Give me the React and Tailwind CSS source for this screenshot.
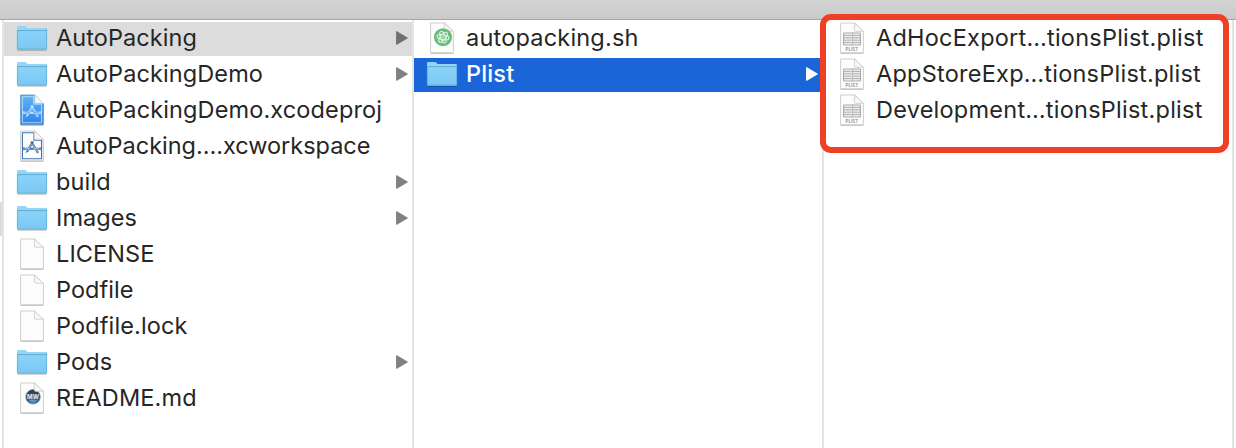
import React from "react";

function Folder() {
  return (
    <svg width="32" height="28" viewBox="0 0 32 28" className="block">
      <defs>
        <linearGradient id="folderFront" x1="0" y1="0" x2="0" y2="1">
          <stop offset="0" stopColor="#8ad3f9" />
          <stop offset="1" stopColor="#7bc8f4" />
        </linearGradient>
      </defs>
      <path d="M1.5 26.1H30.5" stroke="#000" strokeOpacity=".28" strokeWidth="1.2" />
      <path d="M1 3.2Q1 2 2.2 2H9Q10 2 10.6 2.9L11.4 4H30Q31 4 31 5V24.6Q31 25.5 30 25.5H2Q1 25.5 1 24.6Z" fill="#93d5f7" />
      <path d="M1 7H31V24.6Q31 25.5 30 25.5H2Q1 25.5 1 24.6Z" fill="url(#folderFront)" />
      <path d="M1 6.6H31" stroke="#5fabd6" strokeWidth="1" />
      <path d="M1.4 7V25H30.6V5" fill="none" stroke="#67afd9" strokeWidth=".9" />
    </svg>
  );
}

function Page({ children }) {
  return (
    <svg width="26" height="32" viewBox="0 .5 26 32" className="block">
      <path d="M1.6 31.8H24.4" stroke="#000" strokeOpacity=".28" strokeWidth="1" />
      <path d="M1.6 1.5H15.8L24.4 10V31.2H1.6Z" fill="#fdfdfd" stroke="#cacaca" strokeWidth=".9" />
      {children}
      <path d="M15.4 1.5V8.6Q15.4 9.8 16.6 9.8H24.4Z" fill="#f7f7f7" stroke="#cbcbcb" strokeWidth=".8" />
    </svg>
  );
}

function Tools({ color, core }) {
  return (
    <g fill="none" strokeLinecap="round">
      <g stroke={color}>
        <path d="M13.6 12.8L8.4 21.6M12.6 12.8L18.6 22.6" strokeWidth="2.2" />
        <path d="M5.4 19.2H20.6" strokeWidth="2" />
        <path d="M8.2 21.8L6.8 23M4.8 18V20.4M21.2 18V20.4" strokeWidth="1" />
      </g>
      <path d="M12.4 15L8.8 21M13.8 15L18.4 22.2M6 19.2H10.5M14.5 19.2H20" stroke={core} strokeWidth=".8" />
    </g>
  );
}

function Project() {
  return (
    <svg width="26" height="32" viewBox="0 .5 26 32" className="block">
      <defs>
        <linearGradient id="projectBlue" x1="0" y1="0" x2="0" y2="1">
          <stop offset="0" stopColor="#62b5f2" />
          <stop offset="1" stopColor="#2e82ee" />
        </linearGradient>
      </defs>
      <path d="M1.8 31.7H24.2" stroke="#777" strokeOpacity=".6" strokeWidth="1" />
      <path d="M1.6 1.5H15.8L24.4 10V31.1H1.6Z" fill="url(#projectBlue)" stroke="#4b8fd0" strokeWidth=".8" />
      <path d="M3.4 3.2H14.5V10.7H22.6V29.2H3.4Z" fill="none" stroke="#b7dcfa" strokeWidth=".9" />
      <path d="M15.8 1.5V9.8H24.4Z" fill="#f7f7f7" stroke="#c5d3df" strokeWidth=".7" />
      <Tools color="#c2e1fc" core="#5ca6f2" />
    </svg>
  );
}

function Workspace() {
  return (
    <Page>
      <path d="M3.4 3.2V29.3H22.6V10.7H15V3.2Z" fill="none" stroke="#3b71ac" strokeWidth="1.1" />
      <Tools color="#3f73aa" core="#b5cee6" />
    </Page>
  );
}

function Markdown() {
  return (
    <Page>
      <defs>
        <radialGradient id="markdownBall" cx=".5" cy=".85" r=".9">
          <stop offset="0" stopColor="#4c8db6" />
          <stop offset=".55" stopColor="#2b506f" />
          <stop offset="1" stopColor="#263a4c" />
        </radialGradient>
      </defs>
      <circle cx="14" cy="15.3" r="7.3" fill="url(#markdownBall)" stroke="#7c8c98" strokeWidth=".7" />
      <text x="14" y="17.1" textAnchor="middle" fontSize="6" fontWeight="700" fill="#e6edf2" fontFamily="Inter, sans-serif">MW</text>
      <path d="M10.7 19.3H17.3" stroke="#8db1c9" strokeWidth=".7" />
    </Page>
  );
}

function Shell() {
  return (
    <svg width="26" height="32" viewBox="0 .5 26 32" className="block">
      <path d="M1.6 31.8H24.4" stroke="#000" strokeOpacity=".28" strokeWidth="1" />
      <path d="M1.6 1.5H15.8L24.4 10V31.2H1.6Z" fill="#fdfdfd" stroke="#cacaca" strokeWidth=".9" />
      <path d="M15.4 1.5V9.8H24.4Z" fill="#f4f4f4" stroke="#cbcbcb" strokeWidth=".8" />
      <circle cx="14" cy="15.7" r="9" fill="#68bd7d" />
      <g fill="none" stroke="#e2f5e6" strokeWidth="1.1">
        <ellipse cx="14" cy="15.7" rx="2.5" ry="6" transform="rotate(-20 14 15.7)" />
        <ellipse cx="14" cy="15.7" rx="2.5" ry="6" transform="rotate(40 14 15.7)" />
        <ellipse cx="14" cy="15.7" rx="2.5" ry="6" transform="rotate(100 14 15.7)" />
      </g>
      <circle cx="14" cy="15.7" r="1" fill="#e2f5e6" />
    </svg>
  );
}

function PlistIcon() {
  return (
    <Page>
      <path d="M4.5 11.5H21.5V23.5H4.5Z" fill="#f0f0f0" stroke="#aaa" strokeWidth="1" />
      <path d="M4.5 13.9H21.5M4.5 16.3H21.5M4.5 18.7H21.5M4.5 21.1H21.5" stroke="#acacac" strokeWidth="1" />
      <path d="M12.3 12V23" stroke="#eee" strokeWidth="1" />
      <path d="M13.2 11V24" stroke="#999" strokeWidth=".6" />
      <text x="12.9" y="29.6" textAnchor="middle" fontSize="4.5" fontWeight="600" fill="#8b8b8b" fontFamily="Inter, sans-serif">PLIST</text>
    </Page>
  );
}

const icons = { folder: Folder, page: Page, project: Project, workspace: Workspace, markdown: Markdown, shell: Shell, plist: PlistIcon };

const firstColumn = [
  { name: "AutoPacking", icon: "folder", arrow: "#707070", row: "bg-[#dcdcdc] text-[#262626]", track: "tracking-[0.07px]" },
  { name: "AutoPackingDemo", icon: "folder", arrow: "#808080", track: "tracking-[0.1px]" },
  { name: "AutoPackingDemo.xcodeproj", icon: "project", track: "tracking-[0.13px]" },
  { name: "AutoPacking….xcworkspace", icon: "workspace", track: "tracking-[-0.02px]" },
  { name: "build", icon: "folder", arrow: "#808080", track: "tracking-[0.15px]" },
  { name: "Images", icon: "folder", arrow: "#808080", track: "tracking-[0.08px]" },
  { name: "LICENSE", icon: "page", track: "tracking-[0.1px]" },
  { name: "Podfile", icon: "page", track: "tracking-[0.07px]" },
  { name: "Podfile.lock", icon: "page", track: "tracking-[0.13px]" },
  { name: "Pods", icon: "folder", arrow: "#808080", track: "tracking-[0.1px]" },
  { name: "README.md", icon: "markdown", track: "tracking-[0.13px]" },
];

const secondColumn = [
  { name: "autopacking.sh", icon: "shell", track: "tracking-[0.2px]" },
  { name: "Plist", icon: "folder", arrow: "#ffffff", row: "bg-[#1a66d9] text-white font-medium", track: "tracking-[0.15px]" },
];

const thirdColumn = [
  { name: "AdHocExport…tionsPlist.plist", icon: "plist", track: "tracking-[0.23px]" },
  { name: "AppStoreExp…tionsPlist.plist", icon: "plist", track: "tracking-[0.24px]" },
  { name: "Development…tionsPlist.plist", icon: "plist", track: "tracking-[0.24px]" },
];

function Column({ items }) {
  return (
    <div className="flex w-[410px] shrink-0 flex-col gap-0.5 border-r-2 border-[#e3e3e3] pt-0.5">
      {items.map((item) => {
        const Icon = icons[item.icon];
        return (
          <div key={item.name} className={`flex h-[34px] shrink-0 items-center pb-0.5 pl-3 pr-[3px] ${item.row || "text-[#262626]"}`}>
            <span className="flex w-8 shrink-0 justify-center">
              <Icon />
            </span>
            <span className={`ml-2 flex-1 whitespace-nowrap text-[23.5px] leading-8 ${item.track}`}>{item.name}</span>
            {item.arrow && (
              <svg width="14" height="16" viewBox="0 0 14 16" className="block shrink-0">
                <path d="M1.6 1.6L12.4 8L1.6 14.4Z" fill={item.arrow} stroke={item.arrow} strokeWidth="1" strokeLinejoin="round" />
              </svg>
            )}
          </div>
        );
      })}
    </div>
  );
}

export default function App() {
  return (
    <div className="relative flex h-[448px] w-[1236px] flex-col overflow-hidden bg-white font-['Inter',sans-serif]">
      <div className="h-5 shrink-0 border-b border-[#a6a6a6] bg-linear-to-b from-[#d2d2d2] to-[#cbcbcb]" />
      <div className="flex min-h-0 flex-1">
        <div className="w-1 shrink-0 border-r-2 border-[#e3e3e3] pt-[182px]">
          <div className="h-[34px] bg-[#dcdcdc]" />
        </div>
        <Column items={firstColumn} />
        <Column items={secondColumn} />
        <Column items={thirdColumn} />
      </div>
      <div className="absolute left-[820px] top-[14px] h-[139px] w-[409px] rounded-[11px] border-[6px] border-[#ee4026]" />
    </div>
  );
}
